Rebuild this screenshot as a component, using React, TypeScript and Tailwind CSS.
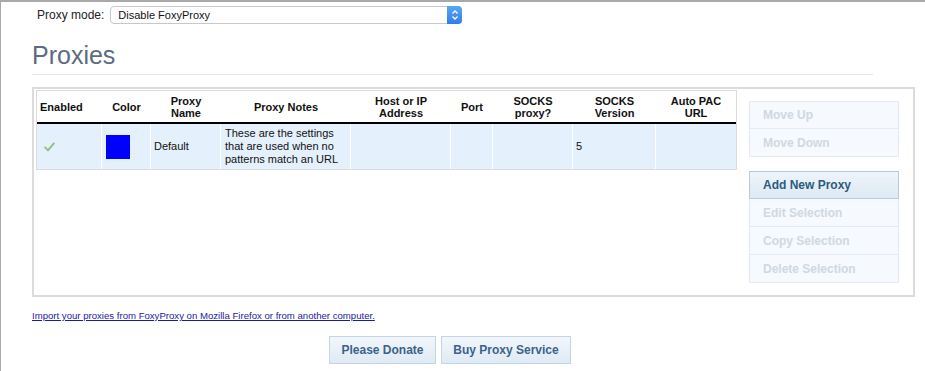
import React from 'react';

const columns = [
  { label: 'Enabled', w: 'w-[65px]', align: 'text-left pl-[3px]' },
  { label: 'Color', w: 'w-[49px]', align: 'text-center' },
  { label: 'Proxy Name', w: 'w-[70px]', align: 'text-center' },
  { label: 'Proxy Notes', w: 'w-[130px]', align: 'text-center' },
  { label: 'Host or IP Address', w: 'w-[100px]', align: 'text-center' },
  { label: 'Port', w: 'w-[42px]', align: 'text-center' },
  { label: 'SOCKS proxy?', w: 'w-[80px]', align: 'text-center' },
  { label: 'SOCKS Version', w: 'w-[83px]', align: 'text-center' },
  { label: 'Auto PAC URL', w: 'w-[80px]', align: 'text-center' },
];

const headerLines: Record<string, string[]> = {
  'Proxy Name': ['Proxy', 'Name'],
  'Host or IP Address': ['Host or IP', 'Address'],
  'SOCKS proxy?': ['SOCKS', 'proxy?'],
  'SOCKS Version': ['SOCKS', 'Version'],
  'Auto PAC URL': ['Auto PAC', 'URL'],
};

const SideButton = ({ label, active = false, first = false }: { label: string; active?: boolean; first?: boolean }) => (
  <div
    className={`h-[28px] flex items-center pl-[13px] text-[12px] font-bold border-x ${first ? 'border-t' : ''} border-b ${
      active
        ? 'bg-gradient-to-b from-[#eef4fa] to-[#dde9f4] border-[#b9cad9] text-[#2c5a80]'
        : 'bg-[#f6f9fd] border-[#e3eaf2] text-[#cfd8e2]'
    }`}
  >
    {label}
  </div>
);

const App: React.FC = () => {
  return (
    <div
      className="w-[925px] h-[371px] bg-white border-t-2 border-l border-[#a9a9a9] overflow-hidden"
      style={{ fontFamily: '"Liberation Sans", Arial, sans-serif' }}
    >
      {/* proxy mode */}
      <div className="flex items-center h-[18px] mt-[4px] ml-[36px]">
        <span className="text-[12px] text-[#222] mr-[6px]">Proxy mode:</span>
        <div className="relative w-[352px] h-[18px] border border-[#c8c8c8] rounded-[4px] bg-white flex items-center pl-[7px] text-[11px] text-[#111]">
          Disable FoxyProxy
          <div className="absolute right-[-1px] top-[-1px] w-[15px] h-[18px] rounded-r-[4px] bg-gradient-to-b from-[#5aa6f5] to-[#2f7ee8] flex items-center justify-center">
            <svg width="8" height="12" viewBox="0 0 8 12" fill="none" stroke="white" strokeWidth="1.3">
              <path d="M1.5 4.5 L4 2 L6.5 4.5" />
              <path d="M1.5 7.5 L4 10 L6.5 7.5" />
            </svg>
          </div>
        </div>
      </div>

      {/* heading */}
      <div className="ml-[31px] mr-[52px] mt-[16px] border-b border-[#e6e6e6] pb-[4px]">
        <h1 className="text-[25px] leading-[30px] text-[#5d6a82]">Proxies</h1>
      </div>

      {/* panel */}
      <div className="ml-[31px] w-[883px] h-[210px] mt-[12px] border-2 border-[#dcdcdc] flex">
        <div className="pt-[1px] pl-[2px]">
          <div className="w-[701px] border border-[#dcdcdc] bg-white">
            <div className="flex border-b-2 border-black h-[33px]">
              {columns.map((c) => (
                <div
                  key={c.label}
                  className={`${c.w} ${c.align} flex flex-col justify-center text-[11px] font-bold text-[#111] leading-[12px]`}
                >
                  {(headerLines[c.label] || [c.label]).map((l) => (
                    <span key={l}>{l}</span>
                  ))}
                </div>
              ))}
            </div>
            <div className="flex h-[45px] bg-[#e4f0fb] text-[11px] text-[#111]">
              <div className="w-[65px] flex items-center pl-[7px] border-r border-white">
                <svg width="11" height="10" viewBox="0 0 12 11">
                  <path d="M1.2 6 L4.3 9.3 L10.8 1.6" fill="none" stroke="#8cc27a" strokeWidth="2" strokeLinecap="round" strokeLinejoin="round" />
                </svg>
              </div>
              <div className="w-[49px] flex items-center pl-[4px] border-r border-white">
                <div className="w-[24px] h-[24px] bg-[#0000ff]" />
              </div>
              <div className="w-[70px] flex items-center pl-[3px] border-r border-white">Default</div>
              <div className="w-[130px] flex items-center pl-[4px] border-r border-white leading-[13px]">
                These are the settings that are used when no patterns match an URL
              </div>
              <div className="w-[100px] border-r border-white" />
              <div className="w-[42px] border-r border-white" />
              <div className="w-[80px] border-r border-white" />
              <div className="w-[83px] flex items-center pl-[3px] border-r border-white">5</div>
              <div className="w-[80px]" />
            </div>
          </div>
        </div>

        <div className="ml-[12px] pt-[12px] w-[150px]">
          <SideButton label="Move Up" first />
          <SideButton label="Move Down" />
          <div className="h-[14px]" />
          <SideButton label="Add New Proxy" active first />
          <SideButton label="Edit Selection" />
          <SideButton label="Copy Selection" />
          <SideButton label="Delete Selection" />
        </div>
      </div>

      {/* import link */}
      <div className="ml-[31px] mt-[5px]">
        <a href="#" className="text-[9.6px] text-[#1b1ba8] underline">
          Import your proxies from FoxyProxy on Mozilla Firefox or from another computer.
        </a>
      </div>

      {/* bottom buttons */}
      <div className="flex gap-[5px] ml-[328px] mt-[10px]">
        <button className="w-[107px] h-[28px] border border-[#c6d5e3] bg-gradient-to-b from-[#f1f6fb] to-[#dfeaf5] text-[12px] font-bold text-[#3b6388]">
          Please Donate
        </button>
        <button className="w-[130px] h-[28px] border border-[#c6d5e3] bg-gradient-to-b from-[#f1f6fb] to-[#dfeaf5] text-[12px] font-bold text-[#3b6388]">
          Buy Proxy Service
        </button>
      </div>
    </div>
  );
};

export default App;
